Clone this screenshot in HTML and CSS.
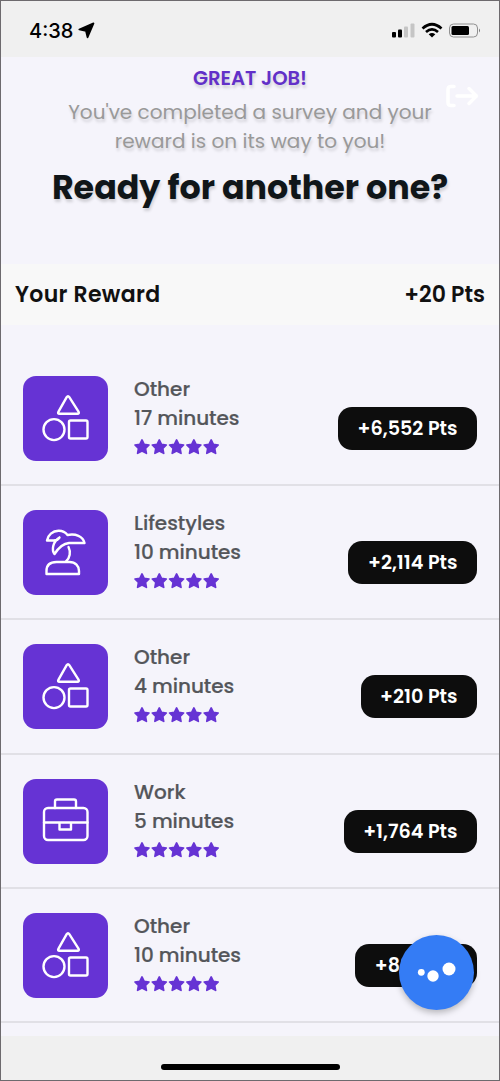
FILE: index.html
```html
<!DOCTYPE html>
<html lang="en">
<head>
<meta charset="utf-8">
<title>Survey reward</title>
<link rel="stylesheet" href="styles.css">
</head>
<body>
<svg class="defs" width="0" height="0">
  <symbol id="shapes" viewBox="0 0 85 85">
    <path d="M43.700 21.200Q45 19.200 46.300 21.200L55.500 35.600Q56.500 37.800 54.500 37.800H36.500Q34.300 37.800 35.500 35.600Z"/>
    <circle cx="31" cy="53.600" r="10.500"/>
    <rect x="46" y="44.500" width="18.500" height="18" rx="1.500"/>
  </symbol>
  <symbol id="palm" viewBox="0 0 85 85">
    <path d="M23.500 64V61C23.500 55 27.500 52 33.500 52H46.500C52.500 52 56 56 56 61V64Z"/>
    <path d="M43 51.500C47 48 48 42 45.500 37"/>
    <path d="M36.500 27.500C35 29.800 33.500 30.500 31 30.500H24C25 25 29.500 21 35.500 20.800C39 20.700 42.500 22.300 44.500 25C52.500 23.500 60 26 61.500 33H46C40 33.500 35 38.500 31.500 44C28.500 40 29.500 32 36.500 27.500"/>
  </symbol>
  <symbol id="briefcase" viewBox="0 0 85 85">
    <rect x="21" y="29" width="43.500" height="32" rx="4"/>
    <path d="M32 29V22.500Q32 20.500 34 20.500H51Q53 20.500 53 22.500V29M21 43.500H64.500M36.500 44V50.500H48V44"/>
  </symbol>
  <symbol id="stars" viewBox="0 0 86 16">
    <path id="star" d="M8 1L10.200 5.300 15 6 11.500 9.400 12.400 14.300 8 12 3.600 14.300 4.500 9.400 1 6 5.800 5.300Z"/>
    <use href="#star" x="17.300"/><use href="#star" x="34.600"/><use href="#star" x="51.900"/><use href="#star" x="69.200"/>
  </symbol>
</svg>
<div class="phone">
  <header class="status">
    <div class="clock"><span>4:38</span>
      <svg width="17" height="17" viewBox="0 0 17 17"><path d="M15.500 1.300L9.500 15.300 8 9 1.300 7.500Z" fill="#000" stroke="#000" stroke-width="1.700" stroke-linejoin="round"/></svg>
    </div>
    <svg class="system" width="90" height="18" viewBox="0 0 90 18">
      <rect x="1" y="10" width="4" height="5.500" rx="1"/><rect x="7" y="7.500" width="4" height="8" rx="1"/>
      <g fill="#c5c5c5"><rect x="13" y="4.500" width="4" height="11" rx="1"/><rect x="19.500" y="1.500" width="4" height="14" rx="1"/></g>
      <g fill="none" stroke="#000" stroke-width="2.700"><path d="M31.500 6.500Q41 -2 50.500 6.500M35 10Q41 4.800 47 10"/></g>
      <path d="M37.700 12.200Q41 9.800 44.300 12.200L41 15.500Z"/>
      <rect x="58.500" y="2" width="28" height="13" rx="4" fill="none" stroke="#909090"/>
      <rect x="60.500" y="4" width="17.500" height="9" rx="1.500"/><path d="M88 6.500Q90 8.500 88 10.500Z" fill="#777"/>
    </svg>
  </header>
  <main class="content">
    <section class="intro">
      <h2 class="praise">GREAT JOB!</h2>
      <p class="message">You've completed a survey and your<br>reward is on its way to you!</p>
      <h1 class="question">Ready for another one?</h1>
      <svg class="exit" width="36" height="28" viewBox="0 0 36 28"><path d="M10 3.500H7Q4 3.500 4 6.500V19.500Q4 22.500 7 22.500H10M13 13H31M25 5.500L32.500 13 25 20.500" fill="none" stroke="#fff" stroke-width="3.500" stroke-linecap="round" stroke-linejoin="round"/></svg>
    </section>
    <section class="reward"><span class="reward-name">Your Reward</span><span>+20 Pts</span></section>
    <section class="surveys">
      <article class="survey"><div class="tile"><svg><use href="#shapes"/></svg></div><div class="info"><span>Other</span><span class="time">17 minutes</span><svg class="rating"><use href="#stars"/></svg></div><div class="points">+6,552 Pts</div></article>
      <article class="survey"><div class="tile"><svg><use href="#palm"/></svg></div><div class="info"><span>Lifestyles</span><span class="time">10 minutes</span><svg class="rating"><use href="#stars"/></svg></div><div class="points">+2,114 Pts</div></article>
      <article class="survey"><div class="tile"><svg><use href="#shapes"/></svg></div><div class="info"><span>Other</span><span class="time">4 minutes</span><svg class="rating"><use href="#stars"/></svg></div><div class="points">+210 Pts</div></article>
      <article class="survey"><div class="tile"><svg><use href="#briefcase"/></svg></div><div class="info"><span>Work</span><span class="time">5 minutes</span><svg class="rating"><use href="#stars"/></svg></div><div class="points">+1,764 Pts</div></article>
      <article class="survey"><div class="tile"><svg><use href="#shapes"/></svg></div><div class="info"><span>Other</span><span class="time">10 minutes</span><svg class="rating"><use href="#stars"/></svg></div><div class="points">+882 Pts</div></article>
    </section>
  </main>
  <footer class="home"><div class="home-bar"></div></footer>
  <div class="chat"><svg width="75" height="75" viewBox="0 0 75 75" fill="#fff"><circle cx="22.300" cy="37.300" r="3.400"/><circle cx="34" cy="41" r="5.700"/><circle cx="50" cy="34" r="6.500"/></svg></div>
</div>
</body>
</html>
```
FILE: styles.css
```css
* { box-sizing: border-box; }
body { margin: 0; font-family: Poppins, Inter, sans-serif; font-size: 20px; }
.defs { position: absolute; }
.phone { position: relative; width: 500px; height: 1081px; border: 1px solid #6d6a6e; background: #f0f0f0; overflow: hidden; display: flex; flex-direction: column; }
.status { height: 56px; flex: none; display: flex; justify-content: space-between; padding: 20px 18px 0 28px; }
.clock { display: flex; gap: 5px; font: 500 20px/21px Inter, sans-serif; }
.clock svg { margin-top: 1px; }
.system { margin-top: 1px; }
.content { flex: 1; background: #f5f4fb; display: flex; flex-direction: column; }
.intro { position: relative; height: 207px; text-align: center; padding-top: 6px; text-shadow: 1px 3px 3px rgba(0, 0, 0, .15); }
.praise { margin: 0; font-size: 19.600px; line-height: 30px; font-weight: 600; color: #6230c8; }
.message { margin: 5px 0 0; line-height: 29px; color: #999; }
.question { margin: 8px 0 0; font-size: 33.300px; line-height: 48px; font-weight: 700; color: #101619; }
.exit { position: absolute; left: 443px; top: 26px; }
.reward { height: 61px; background: #f8f8f8; display: flex; justify-content: space-between; align-items: center; padding: 0 14px; font-size: 22px; font-weight: 600; color: #111; }
.reward-name { letter-spacing: .35px; }
.surveys { margin-top: 26.500px; }
.survey { height: 134.400px; border-bottom: 2px solid #e1e0e6; display: flex; padding: 24px 22px 0; }
.tile { width: 85px; height: 85px; border-radius: 13px; background: #6633d4; }
.tile svg { display: block; width: 85px; height: 85px; fill: none; stroke: #fff; stroke-width: 2.400; stroke-linecap: round; stroke-linejoin: round; }
.info { flex: 1; margin: -1px 0 0 26px; display: flex; flex-direction: column; align-items: flex-start; line-height: 29px; font-weight: 500; color: #54565a; white-space: nowrap; -webkit-text-stroke: .2px #54565a; }
.time { letter-spacing: -.05px; }
.rating { width: 86px; height: 16px; margin-top: 6px; fill: #6633d4; stroke: #6633d4; stroke-width: 1.700; stroke-linejoin: round; }
.points { height: 43px; margin-top: 31px; padding: 0 19.500px; border-radius: 14px; background: #0d0d0d; color: #fff; display: flex; align-items: center; font-size: 19.200px; font-weight: 600; white-space: nowrap; }
.home { height: 44px; flex: none; display: flex; justify-content: center; padding: 28px 0 0 1px; }
.home-bar { width: 179px; height: 6px; border-radius: 3px; background: #000; }
.chat { position: absolute; left: 398px; top: 934px; width: 75px; height: 75px; border-radius: 50%; background: #347cf5; box-shadow: 0 3px 6px rgba(0, 0, 0, .25); }
```
